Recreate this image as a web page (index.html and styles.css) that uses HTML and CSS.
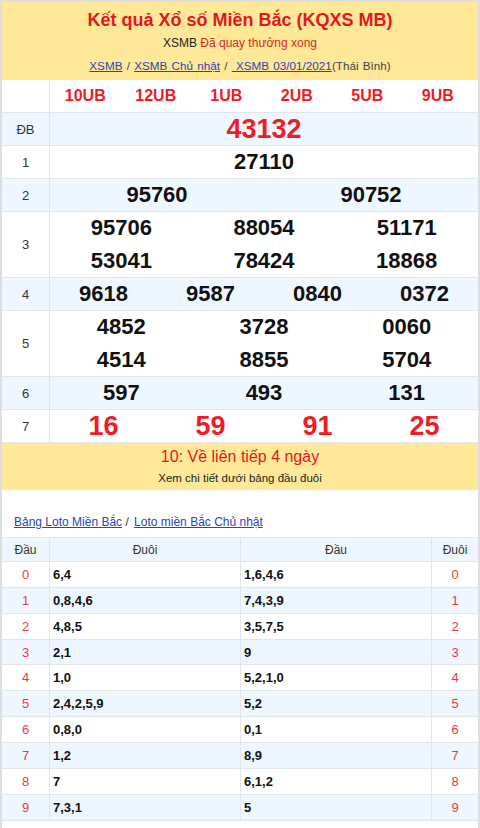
FILE: index.html
```html
<!DOCTYPE html>
<html lang="vi">
<head>
<meta charset="utf-8">
<title>Kết quả Xổ số Miền Bắc</title>
<link rel="stylesheet" href="styles.css">
</head>
<body>
<div class="page">
  <header class="head">
    <h1 class="title">Kết quả Xổ số Miền Bắc (KQXS MB)</h1>
    <p class="status">XSMB <span class="done">Đã quay thưởng xong</span></p>
    <p class="crumbs"><a href="#">XSMB</a> / <a href="#">XSMB Chủ nhật</a> / <a href="#">&nbsp;XSMB 03/01/2021</a>(Thái Bình)</p>
  </header>

  <div class="results">
    <div class="row">
      <div class="lbl"></div>
      <div class="cells c6 codes"><span>10UB</span><span>12UB</span><span>1UB</span><span>2UB</span><span>5UB</span><span>9UB</span></div>
    </div>
    <div class="row alt">
      <div class="lbl">ĐB</div>
      <div class="cells c1 big red"><span>43132</span></div>
    </div>
    <div class="row">
      <div class="lbl">1</div>
      <div class="cells c1 num"><span>27110</span></div>
    </div>
    <div class="row alt">
      <div class="lbl">2</div>
      <div class="cells c2 num"><span>95760</span><span>90752</span></div>
    </div>
    <div class="row">
      <div class="lbl">3</div>
      <div class="cells c3 num"><span>95706</span><span>88054</span><span>51171</span><span>53041</span><span>78424</span><span>18868</span></div>
    </div>
    <div class="row alt">
      <div class="lbl">4</div>
      <div class="cells c4 num"><span>9618</span><span>9587</span><span>0840</span><span>0372</span></div>
    </div>
    <div class="row">
      <div class="lbl">5</div>
      <div class="cells c3 num"><span>4852</span><span>3728</span><span>0060</span><span>4514</span><span>8855</span><span>5704</span></div>
    </div>
    <div class="row alt">
      <div class="lbl">6</div>
      <div class="cells c3 num"><span>597</span><span>493</span><span>131</span></div>
    </div>
    <div class="row">
      <div class="lbl">7</div>
      <div class="cells c4 big red"><span>16</span><span>59</span><span>91</span><span>25</span></div>
    </div>
  </div>

  <div class="notice">
    <p class="notice-main">10: Về liên tiếp 4 ngày</p>
    <p class="notice-sub">Xem chi tiết dưới bảng đầu đuôi</p>
  </div>

  <p class="loto-links"><a href="#">Bảng Loto Miền Bắc</a> / <a class="second" href="#">Loto miền Bắc Chủ nhật</a></p>

  <div class="loto">
    <div class="lrow lhead"><span>Đầu</span><span>Đuôi</span><span>Đầu</span><span>Đuôi</span></div>
    <div class="lrow"><span class="d">0</span><span class="v">6,4</span><span class="v">1,6,4,6</span><span class="d">0</span></div>
    <div class="lrow alt"><span class="d">1</span><span class="v">0,8,4,6</span><span class="v">7,4,3,9</span><span class="d">1</span></div>
    <div class="lrow"><span class="d">2</span><span class="v">4,8,5</span><span class="v">3,5,7,5</span><span class="d">2</span></div>
    <div class="lrow alt"><span class="d">3</span><span class="v">2,1</span><span class="v">9</span><span class="d">3</span></div>
    <div class="lrow"><span class="d">4</span><span class="v">1,0</span><span class="v">5,2,1,0</span><span class="d">4</span></div>
    <div class="lrow alt"><span class="d">5</span><span class="v">2,4,2,5,9</span><span class="v">5,2</span><span class="d">5</span></div>
    <div class="lrow"><span class="d">6</span><span class="v">0,8,0</span><span class="v">0,1</span><span class="d">6</span></div>
    <div class="lrow alt"><span class="d">7</span><span class="v">1,2</span><span class="v">8,9</span><span class="d">7</span></div>
    <div class="lrow"><span class="d">8</span><span class="v">7</span><span class="v">6,1,2</span><span class="d">8</span></div>
    <div class="lrow alt"><span class="d">9</span><span class="v">7,3,1</span><span class="v">5</span><span class="d">9</span></div>
  </div>
</div>
</body>
</html>
```

FILE: styles.css
```css
* { box-sizing: border-box; }
html, body { margin: 0; padding: 0; background: #fff; }
body {
  font-family: "Liberation Sans", Arial, sans-serif;
  color: #222;
  width: 480px;
}
p, h1 { margin: 0; }

.page {
  width: 480px;
  min-height: 828px;
  border: 2px solid #dedede;
  border-bottom: none;
}

/* header */
.head {
  background: #ffe999;
  text-align: center;
  padding: 6px 0 4px;
  height: 78px;
}
.title {
  font-size: 18px;
  font-weight: bold;
  color: #e5161e;
  line-height: 24px;
}
.status {
  font-size: 12px;
  line-height: 22px;
  color: #222;
}
.status .done { color: #d42a1f; }
.crumbs {
  font-size: 11.7px;
  line-height: 20px;
  margin-top: 2px;
  color: #444;
  word-spacing: 1px;
}
.crumbs a { color: #2c45b0; text-decoration: underline; }

/* result table */
.row {
  display: grid;
  grid-template-columns: 48px 1fr;
  border-bottom: 1px solid #e1e6eb;
  background: #fff;
}
.row.alt { background: #eef6ff; }
.lbl {
  border-right: 1px solid #e1e6eb;
  display: flex;
  align-items: center;
  justify-content: center;
  font-size: 13px;
  color: #333;
}
.cells {
  display: grid;
  align-items: center;
  text-align: center;
  row-gap: 1px;
}
.cells span { line-height: 32px; height: 32px; }
.c1 { grid-template-columns: 1fr; }
.c2 { grid-template-columns: repeat(2, 1fr); }
.c3 { grid-template-columns: repeat(3, 1fr); }
.c4 { grid-template-columns: repeat(4, 1fr); }
.c6 { grid-template-columns: repeat(6, 1fr); padding-right: 5px; }

.codes { font-size: 16px; font-weight: bold; color: #ee1c25; }
.num { font-size: 22px; font-weight: bold; color: #111; }
.big { font-size: 27px; font-weight: bold; }
.red { color: #ee1c25; }

/* notice */
.notice {
  background: #ffe999;
  text-align: center;
  padding: 3px 0 2px;
  height: 47px;
}
.notice-main { font-size: 16px; line-height: 22px; color: #e5161e; }
.notice-sub { font-size: 11.5px; line-height: 20px; color: #222; }

/* loto links */
.loto-links {
  font-size: 12px;
  line-height: 20px;
  padding: 22px 0 5px 12px;
  color: #444;
}
.loto-links a { color: #2c45b0; text-decoration: underline; }
.loto-links .second { margin-left: 2px; }

/* loto table */
.loto { border-top: 1px solid #e1e6eb; }
.lrow {
  display: grid;
  grid-template-columns: 48px 191px 191px 1fr;
  height: 25.86px;
  border-bottom: 1px solid #e1e6eb;
  background: #fff;
}
.lrow.alt, .lrow.lhead { background: #eef6ff; }
.lrow.lhead { height: 24px; }
.lrow span {
  display: flex;
  align-items: center;
  font-size: 13px;
}
.lrow span:not(:last-child) { border-right: 1px solid #e1e6eb; }
.lhead span { justify-content: center; font-size: 12px; color: #333; }
.lrow .d { justify-content: center; color: #ea3a41; }
.lrow .v { padding-left: 3px; font-weight: bold; color: #111; }
```
